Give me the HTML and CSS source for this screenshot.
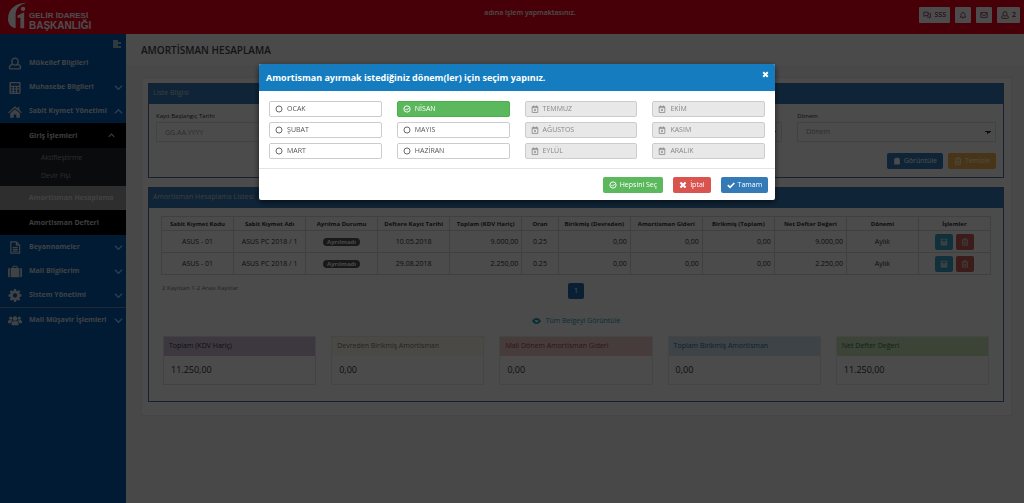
FILE: index.html
```html
<!DOCTYPE html>
<html lang="tr">
<head>
<meta charset="utf-8">
<title>Amortisman Hesaplama</title>
<link rel="stylesheet" href="styles.css">
</head>
<body>
<svg class="sprite" aria-hidden="true">
  <symbol id="down" viewBox="0 0 10 10"><path d="M1 3l4 4 4-4" fill="none" stroke="currentColor" stroke-width="1.5"/></symbol>
  <symbol id="up" viewBox="0 0 10 10"><path d="M1 7l4-4 4 4" fill="none" stroke="currentColor" stroke-width="1.5"/></symbol>
  <symbol id="user" viewBox="0 0 14 14"><path d="M7 1.2a3.4 3.4 0 0 1 3.4 3.6c0 2.2-1.4 4-3.4 4s-3.4-1.8-3.4-4A3.4 3.4 0 0 1 7 1.2zM4.4 8C2.400 8.300 1 9.500 1 11.500c0 .9.600 1.300 1.400 1.300h9.200c.8 0 1.400-.4 1.400-1.300C13 9.500 11.600 8.300 9.600 8" fill="none" stroke="currentColor" stroke-width="1.500"/></symbol>
  <symbol id="calc" viewBox="0 0 14 14"><path fill="currentColor" fill-rule="evenodd" d="M2 1h10a1 1 0 0 1 1 1v11a1 1 0 0 1-1 1H2a1 1 0 0 1-1-1V2a1 1 0 0 1 1-1zm.5 1.500v2.500h9V2.500zm0 4v1.500h2V6.500zm3.500 0v1.500h2V6.500zm3.500 0v1.500h2V6.500zm-7 2.700v1.500h2V9.200zm3.500 0v1.500h2V9.200zm3.500 0v3.500h2V9.200zm-7 2.500v1h2v-1zm3.500 0v1h2v-1z"/></symbol>
  <symbol id="home" viewBox="0 0 16 14"><path fill="currentColor" d="M8 1l3 2.600V2h2v3.400L16 8l-.9 1L8 3 .9 9 0 8zM8 4.300l5.500 4.600V14H9.500v-3.500h-3V14H2.500V8.900z"/></symbol>
  <symbol id="file" viewBox="0 0 14 14"><path d="M2.500 1h6l3.500 3.500V13H2.500zM8.500 1v3.500H12M4.500 7H10M4.500 9H10M4.500 11H10" fill="none" stroke="currentColor" stroke-width="1.300"/></symbol>
  <symbol id="case" viewBox="0 0 16 14"><path fill="currentColor" fill-rule="evenodd" d="M2 3v10.500H1.500A1.500 1.500 0 0 1 0 12V4.500A1.500 1.500 0 0 1 1.500 3zM14 3v10.500h.5A1.500 1.500 0 0 0 16 12V4.500A1.500 1.500 0 0 0 14.500 3zM3 13.500V3h2V1.500L6 .5h4l1 1V3h2v10.500zM6.200 3h3.600V1.700H6.200z"/></symbol>
  <symbol id="gear" viewBox="0 0 14 14"><path fill="currentColor" fill-rule="evenodd" d="M5.900 0h2.200l.4 2 1 .4 1.700-1.100 1.500 1.500L11.600 4.500l.4 1 2 .4v2.200l-2 .4-.4 1 1.100 1.700-1.500 1.500-1.700-1.100-1 .4-.4 2H5.900l-.4-2-1-.4-1.700 1.100-1.500-1.500 1.100-1.700-.4-1-2-.4V5.900l2-.4.4-1L1.300 2.800l1.500-1.500 1.700 1.100 1-.4zM7 4.700a2.300 2.300 0 1 0 0 4.600 2.300 2.300 0 0 0 0-4.600z"/></symbol>
  <symbol id="group" viewBox="0 0 18 14"><g fill="currentColor"><circle cx="9" cy="4.500" r="3"/><path d="M4.500 13v-2.500C4.500 8.500 6 7.500 7 7.500c1 .8 3 .8 4 0 1 0 2.500 1 2.500 3V13z"/><circle cx="3.500" cy="4" r="2"/><circle cx="14.500" cy="4" r="2"/><path d="M0 10.500V8.500C0 7 1 6.300 2 6.300c1 .6 2 .6 3 .2.300.8.600 1 1 1.200-1.500.4-2.300 1.400-2.500 2.800zM18 10.500V8.500c0-1.500-1-2.200-2-2.200-1 .6-2 .6-3 .2-.3.800-.6 1-1 1.200 1.500.4 2.300 1.400 2.500 2.800z"/></g></symbol>
  <symbol id="ring" viewBox="0 0 10 10"><circle cx="5" cy="5" r="3.800" fill="none" stroke="currentColor" stroke-width="1.100"/></symbol>
  <symbol id="ringcheck" viewBox="0 0 10 10"><circle cx="5" cy="5" r="3.900" fill="none" stroke="currentColor" stroke-width="1.200"/><path d="M3 4.900l1.500 1.500L7.200 3.700" fill="none" stroke="currentColor" stroke-width="1.200"/></symbol>
  <symbol id="calendar" viewBox="0 0 10 10"><path d="M1.500 2h7v7.300h-7zM1.500 3.300h7M3.300.5v2M6.700.5v2M3.900 5.200l2.200 2.200M6.100 5.200L3.900 7.400" fill="none" stroke="currentColor"/></symbol>
  <symbol id="cross" viewBox="0 0 10 10"><path d="M1.800 1.800l6.400 6.400M8.200 1.800L1.800 8.200" stroke="currentColor" stroke-width="2.700"/></symbol>
  <symbol id="check" viewBox="0 0 10 10"><path d="M1 5.200l2.800 2.800L9.200 2.500" fill="none" stroke="currentColor" stroke-width="2"/></symbol>
  <symbol id="trash" viewBox="0 0 10 10"><path d="M1 2.500h8M3.500 2.300V1h3v1.300M2 2.700V9h6V2.700M4 4.500v3M6 4.500v3" fill="none" stroke="currentColor"/></symbol>
  <symbol id="doc" viewBox="0 0 10 10"><path fill="currentColor" d="M1.500 2H3V1h4v1h1.500v7.500h-7z"/></symbol>
  <symbol id="save" viewBox="0 0 10 10"><path fill="currentColor" fill-rule="evenodd" d="M1 1h8v8.500H1zM2.200 2v2h5.600V2zM2.500 6v.8h1.200V6zM4.500 6v.8h1.200V6zM6.500 6v.8h1.200V6z"/></symbol>
  <symbol id="eye" viewBox="0 0 12 8"><path fill="currentColor" fill-rule="evenodd" d="M0 4c3-5.300 9-5.300 12 0-3 5.300-9 5.300-12 0zm4-1.500a2.500 2.500 0 0 0 4 2.500 2.500 2.500 0 0 0 .2-2L6.500 3z"/></symbol>
  <symbol id="chat" viewBox="0 0 10 10"><path d="M1 1.500h5.500v4H3L1.500 7V5.500H1zM8 3h1.300v4.500h-.8V9L7 7.500H4.500" fill="none" stroke="currentColor"/></symbol>
  <symbol id="bell" viewBox="0 0 10 10"><path d="M1.500 7.700C2.700 6.500 2.500 5 2.700 4c.2-1.300 1-2 2.300-2s2.100.7 2.300 2c.2 1 0 2.500 1.200 3.700zM4 8.500h2M5 1v1" fill="none" stroke="currentColor"/></symbol>
  <symbol id="mail" viewBox="0 0 10 10"><path d="M1 2h8v6H1zM1 3l4 3 4-3" fill="none" stroke="currentColor"/></symbol>
  <symbol id="list" viewBox="0 0 8 8"><path d="M0 1h5M0 3h8M0 5h5M0 7h8" stroke="currentColor" stroke-width="1.300"/></symbol>
</svg>

<header class="topbar">
  <a class="brand" href="#">
    <svg class="brand-mark" viewBox="0 0 21 27"><path fill="currentColor" d="M20 0C9 0 0 6 0 17c0 5 2.500 9 8 10V12c0-6 4-10 12-12z"/><path fill="currentColor" d="M10 13.500l7-3.500v17h-4V15.500l-3 .5z"/><circle cx="15.800" cy="6.500" r="2.300" fill="currentColor"/></svg>
    <span class="brand-name"><span>GELİR İDARESİ</span><span class="brand-second">BAŞKANLIĞI</span></span>
  </a>
  <p class="acting">adına işlem yapmaktasınız.</p>
  <div class="top-actions">
    <button class="top-btn"><svg class="icon"><use href="#chat"/></svg>SSS</button>
    <button class="top-btn" aria-label="Bildirimler"><svg class="icon"><use href="#bell"/></svg></button>
    <button class="top-btn" aria-label="Mesajlar"><svg class="icon"><use href="#mail"/></svg></button>
    <button class="top-btn" aria-label="Kullanıcı"><svg class="icon"><use href="#user"/></svg>2</button>
  </div>
</header>

<div class="shell">
  <nav class="sidebar">
    <button class="collapse" aria-label="Menüyü daralt"><svg class="icon"><use href="#list"/></svg></button>
    <a class="item" href="#"><svg class="item-icon"><use href="#user"/></svg><span>Mükellef Bilgileri</span></a>
    <a class="item" href="#"><svg class="item-icon"><use href="#calc"/></svg><span>Muhasebe Bilgileri</span><svg class="arrow"><use href="#down"/></svg></a>
    <a class="item" href="#"><svg class="item-icon"><use href="#home"/></svg><span>Sabit Kıymet Yönetimi</span><svg class="arrow"><use href="#up"/></svg></a>
    <div class="submenu">
      <a class="item sub" href="#"><span>Giriş İşlemleri</span><svg class="arrow arrow-in"><use href="#up"/></svg></a>
      <div class="leafs">
        <a class="leaf" href="#">Aktifleştirme</a>
        <a class="leaf" href="#">Devir Fişi</a>
      </div>
      <a class="item sub current" href="#"><span>Amortisman Hesaplama</span></a>
      <a class="item sub" href="#"><span>Amortisman Defteri</span></a>
    </div>
    <a class="item" href="#"><svg class="item-icon"><use href="#file"/></svg><span>Beyannameler</span><svg class="arrow"><use href="#down"/></svg></a>
    <a class="item" href="#"><svg class="item-icon"><use href="#case"/></svg><span>Mali Bilgilerim</span><svg class="arrow"><use href="#down"/></svg></a>
    <a class="item" href="#"><svg class="item-icon"><use href="#gear"/></svg><span>Sistem Yönetimi</span><svg class="arrow"><use href="#down"/></svg></a>
    <a class="item ruled" href="#"><svg class="item-icon"><use href="#group"/></svg><span>Mali Müşavir İşlemleri</span><svg class="arrow"><use href="#down"/></svg></a>
  </nav>

  <main class="main">
    <h1 class="page-title">AMORTİSMAN HESAPLAMA</h1>
    <div class="sheet">
      <section class="panel">
        <h2 class="panel-head">Liste Bilgisi</h2>
        <form class="filters">
          <div class="field"><label for="start">Kayıt Başlangıç Tarihi</label><input id="start" type="text" placeholder="GG.AA.YYYY"></div>
          <div class="field"><input type="text" aria-label="Kayıt Bitiş Tarihi"></div>
          <div class="field"><select aria-label="Durum"><option></option></select></div>
          <div class="field"><label for="period">Dönem</label><select id="period"><option>Dönem</option></select></div>
          <div class="filter-actions">
            <button type="button" class="btn primary"><svg class="icon"><use href="#doc"/></svg>Görüntüle</button>
            <button type="button" class="btn warning"><svg class="icon"><use href="#trash"/></svg>Temizle</button>
          </div>
        </form>
      </section>

      <section class="panel">
        <h2 class="panel-head">Amortisman Hesaplama Listesi</h2>
        <div class="list">
          <table class="grid">
            <colgroup><col><col><col><col><col><col class="narrow"><col><col><col><col><col><col></colgroup>
            <thead><tr><th>Sabit Kıymet Kodu</th><th>Sabit Kıymet Adı</th><th>Ayrılma Durumu</th><th>Deftere Kayıt Tarihi</th><th>Toplam (KDV Hariç)</th><th>Oran</th><th>Birikmiş (Devreden)</th><th>Amortisman Gideri</th><th>Birikmiş (Toplam)</th><th>Net Defter Değeri</th><th>Dönemi</th><th>İşlemler</th></tr></thead>
            <tbody>
              <tr><td>ASUS - 01</td><td>ASUS PC 2018 / 1</td><td><span class="badge">Ayrılmadı</span></td><td>10.05.2018</td><td class="num">9.000,00</td><td>0.25</td><td class="num">0,00</td><td class="num">0,00</td><td class="num">0,00</td><td class="num">9.000,00</td><td>Aylık</td><td><span class="ops"><button class="op info" aria-label="Hesapla"><svg class="icon"><use href="#save"/></svg></button><button class="op danger" aria-label="Sil"><svg class="icon"><use href="#trash"/></svg></button></span></td></tr>
              <tr><td>ASUS - 01</td><td>ASUS PC 2018 / 1</td><td><span class="badge">Ayrılmadı</span></td><td>29.08.2018</td><td class="num">2.250,00</td><td>0.25</td><td class="num">0,00</td><td class="num">0,00</td><td class="num">0,00</td><td class="num">2.250,00</td><td>Aylık</td><td><span class="ops"><button class="op info" aria-label="Hesapla"><svg class="icon"><use href="#save"/></svg></button><button class="op danger" aria-label="Sil"><svg class="icon"><use href="#trash"/></svg></button></span></td></tr>
            </tbody>
          </table>
          <div class="paging">
            <p>2 Kayıttan 1-2 Arası Kayıtlar</p>
            <button class="page">1</button>
          </div>
          <a class="show-all" href="#"><svg class="eye"><use href="#eye"/></svg>Tüm Belgeyi Görüntüle</a>
          <div class="totals">
            <div class="total purple"><h3>Toplam (KDV Hariç)</h3><p>11.250,00</p></div>
            <div class="total yellow"><h3>Devreden Birikmiş Amortisman</h3><p>0,00</p></div>
            <div class="total red"><h3>Mali Dönem Amortisman Gideri</h3><p>0,00</p></div>
            <div class="total blue"><h3>Toplam Birikmiş Amortisman</h3><p>0,00</p></div>
            <div class="total green"><h3>Net Defter Değeri</h3><p>11.250,00</p></div>
          </div>
        </div>
      </section>
    </div>
  </main>
</div>

<div class="backdrop">
  <section class="modal" role="dialog" aria-labelledby="modal-title">
    <header class="modal-head">
      <h2 id="modal-title">Amortisman ayırmak istediğiniz dönem(ler) için seçim yapınız.</h2>
      <button class="close" aria-label="Kapat"><svg class="icon"><use href="#cross"/></svg></button>
    </header>
    <div class="months">
      <label class="month"><input type="checkbox"><svg class="icon"><use href="#ring"/></svg>OCAK</label>
      <label class="month"><input type="checkbox"><svg class="icon"><use href="#ring"/></svg>ŞUBAT</label>
      <label class="month"><input type="checkbox"><svg class="icon"><use href="#ring"/></svg>MART</label>
      <label class="month picked"><input type="checkbox" checked><svg class="icon"><use href="#ringcheck"/></svg>NİSAN</label>
      <label class="month"><input type="checkbox"><svg class="icon"><use href="#ring"/></svg>MAYIS</label>
      <label class="month"><input type="checkbox"><svg class="icon"><use href="#ring"/></svg>HAZİRAN</label>
      <label class="month off"><input type="checkbox" disabled><svg class="icon"><use href="#calendar"/></svg>TEMMUZ</label>
      <label class="month off"><input type="checkbox" disabled><svg class="icon"><use href="#calendar"/></svg>AĞUSTOS</label>
      <label class="month off"><input type="checkbox" disabled><svg class="icon"><use href="#calendar"/></svg>EYLÜL</label>
      <label class="month off"><input type="checkbox" disabled><svg class="icon"><use href="#calendar"/></svg>EKİM</label>
      <label class="month off"><input type="checkbox" disabled><svg class="icon"><use href="#calendar"/></svg>KASIM</label>
      <label class="month off"><input type="checkbox" disabled><svg class="icon"><use href="#calendar"/></svg>ARALIK</label>
    </div>
    <footer class="modal-foot">
      <button class="btn success"><svg class="icon"><use href="#ringcheck"/></svg>Hepsini Seç</button>
      <button class="btn cancel"><svg class="icon"><use href="#cross"/></svg>İptal</button>
      <button class="btn primary"><svg class="icon"><use href="#check"/></svg>Tamam</button>
    </footer>
  </section>
</div>
</body>
</html>
```
FILE: styles.css
```css
* { box-sizing: border-box; }
body {
  margin: 0;
  min-height: 100vh;
  display: flex;
  flex-direction: column;
  font: 7px/10px "Open Sans", "Noto Sans", sans-serif;
  color: #333;
  background: #f1f2f6;
}
h1, h2, h3, p { margin: 0; font-weight: 400; font-size: inherit; }
a { color: inherit; text-decoration: none; }
button, input, select { font: inherit; color: inherit; border: 0; margin: 0; padding: 0; }
.sprite { position: absolute; width: 0; height: 0; }
.icon { width: 8px; height: 8px; flex: none; display: block; }

/* Top bar */
.topbar {
  height: 34px;
  display: grid;
  grid-template-columns: 1fr auto 1fr;
  align-items: start;
  padding: 0 4px 0 8px;
  background: #f2001c;
  color: #fff;
}
.brand { display: flex; align-items: flex-start; gap: 1px; padding-top: 2px; }
.brand-mark { width: 20px; height: 27px; }
.brand-name { display: flex; flex-direction: column; padding-top: 9px; font: 700 8px/10px "Liberation Sans", Arial, sans-serif; }
.brand-second { font-size: 10px; }
.acting { padding: 8px 0 0 32px; font-weight: 600; }
.top-actions { display: flex; justify-content: flex-end; gap: 5px; padding-top: 7px; }
.top-btn {
  height: 16px;
  min-width: 16px;
  padding: 0 4px;
  display: flex;
  align-items: center;
  gap: 3px;
  border-radius: 1px;
  background: #fff;
  color: #8a2a50;
  font-weight: 600;
}

/* Side menu */
.shell { flex: 1; display: flex; }
.sidebar { width: 126px; flex: none; background: #005aaa; color: #d5dde5; font-weight: 700; }
.collapse { display: block; margin-left: auto; padding: 6px 5px 3px; background: none; }
.item { display: flex; align-items: center; height: 24px; padding: 0 3px 0 8px; }
.item-icon { width: 14px; height: 13px; margin-right: 7px; }
.arrow { width: 9px; height: 9px; margin-left: auto; color: #9cf; }
.arrow-in { width: 7px; height: 7px; margin-right: 8px; color: #ccc; }
.ruled { border-top: 1px solid #6b8ba6; height: 25px; }
.submenu { background: #000; color: #ccc; }
.sub { height: 25px; padding-left: 29px; }
.leafs { background: #22262e; padding: 1px 0; color: #999; font-weight: 400; }
.leaf { display: block; height: 18px; padding: 4px 0 0 41px; }
.current { background: #999; color: #ddd; height: 24px; }

/* Page */
.main { flex: 1; min-width: 0; }
.page-title { height: 31px; padding: 10px 15px 0; font-size: 10px; line-height: 12px; font-weight: 600; background: #f9f9f9; color: #444; }
.sheet {
  margin: 12px 12px 0 15px;
  padding: 5px 7px 13px 6px;
  display: flex;
  flex-direction: column;
  gap: 9px;
  background: #fafafa;
  border: 1px solid #e7e8ec;
}
.panel { border: 1px solid #4d6c9a; }
.panel-head { height: 20px; padding: 4px; background: #337ab7; color: #ccc; }
.filters { display: grid; grid-template-columns: repeat(4, 1fr); gap: 11px 15px; padding: 7px 7px 8px; }
.field { display: flex; flex-direction: column; justify-content: flex-end; gap: 1px; }
.field label { font-size: 6px; }
.field input, .field select { width: 100%; height: 20px; padding: 0 8px; border: 1px solid #ddd; background-color: #fafafa; color: #999; }
.field input::placeholder { color: #999; }
.field select {
  appearance: none;
  background-image: linear-gradient(45deg, transparent 50%, #333 50%), linear-gradient(135deg, #333 50%, transparent 50%);
  background-position: right 7px center, right 4px center;
  background-size: 3px 3px;
  background-repeat: no-repeat;
}
.filter-actions { grid-column: 1 / -1; display: flex; justify-content: flex-end; gap: 5px; }
.btn { display: flex; align-items: center; gap: 3px; height: 16px; padding: 0 6px; border-radius: 2px; color: #fff; }
.primary { background: #337ab7; }
.warning { background: #f0ad4e; }
.success { background: #5cb85c; }
.cancel { background: #d9534f; }

/* Record list */
.list { padding: 8px 12px 16px; }
.grid { width: 100%; table-layout: fixed; border-collapse: collapse; text-align: center; }
.grid .narrow { width: 4.4%; }
.grid th, .grid td { padding: 0; border: 1px solid #d5d5d5; white-space: nowrap; }
.grid th { height: 14px; font-size: 6px; font-weight: 700; line-height: 8px; }
.grid td { height: 22px; }
.grid .num { text-align: right; padding-right: 3px; }
.badge { display: inline-block; padding: 0 4px; border-radius: 4px; color: #eee; font-size: 6px; line-height: 8px; font-weight: 700; background: #555; }
.ops { display: flex; justify-content: center; gap: 3px; }
.op { width: 18px; height: 16px; display: grid; place-items: center; border-radius: 2px; color: #ddd; }
.info { background: #36a6c6; }
.danger { background: #c95f5c; }
.paging { display: grid; grid-template-columns: 1fr auto 1fr; padding: 8px 1px 0; font-size: 6px; color: #777; }
.page { width: 16px; height: 16px; border-radius: 2px; background: #1f6bb0; color: #fff; font-size: 7px; }
.show-all { display: flex; width: fit-content; margin: 17px auto 0; align-items: center; gap: 5px; color: #1a9bb0; }
.eye { width: 9px; height: 6px; }
.totals { display: grid; grid-template-columns: repeat(5, 1fr); gap: 15px; padding: 10px 2px 0; }
.total { border: 1px solid #ddd; }
.total h3 { height: 19px; padding: 4px 5px; }
.total p { padding: 8px 7px; font-size: 9px; line-height: 12px; }
.purple h3 { background: #cbbcd6; }
.yellow h3 { background: #f7f6e6; color: #777; }
.red h3 { background: #ebc8c8; color: #a94442; }
.blue h3 { background: #cfe0ee; color: #31708f; }
.green h3 { background: #c9dfba; color: #3c763d; }
.yellow, .red, .blue, .green { border-color: #e6e6e6; }

/* Period dialog */
.backdrop { position: fixed; inset: 0; background: rgba(0, 0, 0, 0.7); }
.modal { width: 50.4%; margin: 64px 0 0 25.3%; background: #fff; border-radius: 2px; box-shadow: 0 2px 6px rgba(0, 0, 0, 0.6); overflow: hidden; }
.modal-head { height: 27px; display: flex; justify-content: space-between; padding: 7px 6px 0 7px; background: #157dbf; color: #fff; }
.modal-head h2 { font-size: 9px; line-height: 13px; font-weight: 700; }
.close { width: 7px; height: 7px; background: none; }
.close .icon { width: 7px; height: 7px; }
.months {
  display: grid;
  grid-template-columns: repeat(4, 1fr);
  grid-template-rows: repeat(3, 16px);
  grid-auto-flow: column;
  gap: 5px 15px;
  padding: 10px 10px 9px;
  border-bottom: 1px solid #e5e5e5;
}
.month { position: relative; display: flex; align-items: center; gap: 4px; padding: 0 5px; border: 1px solid #ccc; border-radius: 2px; color: #555; }
.month input { position: absolute; inset: 0; opacity: 0; }
.picked { background: #5cb85c; border-color: #4cae4c; color: #fff; }
.off { background: #e8e8e8; color: #888; }
.modal-foot { display: flex; justify-content: flex-end; gap: 10px; padding: 8px 7px 7px; }
```
